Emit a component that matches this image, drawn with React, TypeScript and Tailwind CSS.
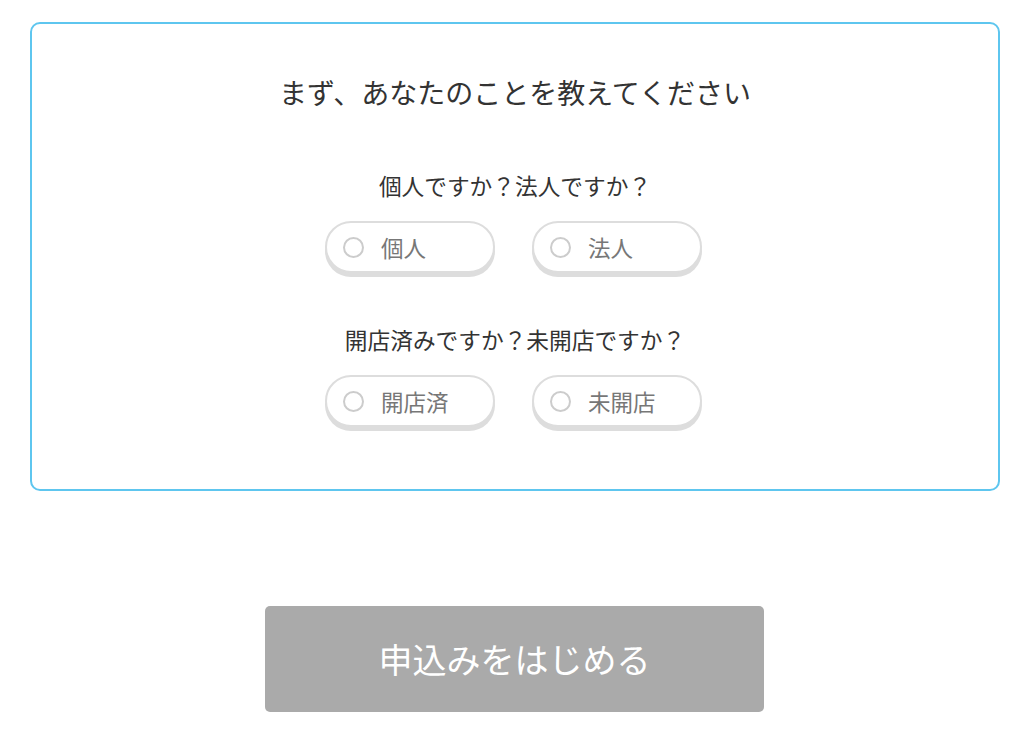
import React from 'react';

const font = { fontFamily: '"Noto Sans CJK JP", "Noto Sans", sans-serif' };

interface ChoiceProps {
    label: string;
}

const Choice: React.FC<ChoiceProps> = ({ label }) => (
    <label className="w-[170px] h-[52px] rounded-full border-2 border-[#dddddd] bg-white shadow-[0_4px_0_#dddddd] flex items-center pl-[16px] gap-[17px] cursor-pointer">
        <span className="w-[21px] h-[21px] rounded-full border-2 border-[#cccccc] bg-white shrink-0"></span>
        <span className="text-[22.5px] leading-[30px] text-[#777777]">{label}</span>
    </label>
);

interface QuestionProps {
    title: string;
    options: string[];
}

const Question: React.FC<QuestionProps> = ({ title, options }) => (
    <div className="flex flex-col items-center">
        <p className="text-[22.7px] leading-[32px] text-[#333333]">{title}</p>
        <div className="flex gap-[37px] mt-[19px] -ml-[3px]">
            {options.map((o) => (
                <Choice key={o} label={o} />
            ))}
        </div>
    </div>
);

export default function App() {
    return (
        <div className="bg-white min-h-[735px] pt-[22px]" style={font}>
            <div className="w-[970px] ml-[30px] border-2 border-[#5ec6ef] rounded-[10px] pt-[48px] pb-[62px] flex flex-col items-center">
                <h2 className="text-[28px] leading-[40px] text-[#333333] font-normal">まず、あなたのことを教えてください</h2>
                <div className="mt-[58px]">
                    <Question title="個人ですか？法人ですか？" options={['個人', '法人']} />
                </div>
                <div className="mt-[51px]">
                    <Question title="開店済みですか？未開店ですか？" options={['開店済', '未開店']} />
                </div>
            </div>

            <div className="flex justify-center mt-[115px] pl-[5px]">
                <button className="w-[499px] h-[106px] bg-[#aaaaaa] rounded-[5px] text-white text-[34px] leading-[40px]">
                    申込みをはじめる
                </button>
            </div>
        </div>
    );
}
